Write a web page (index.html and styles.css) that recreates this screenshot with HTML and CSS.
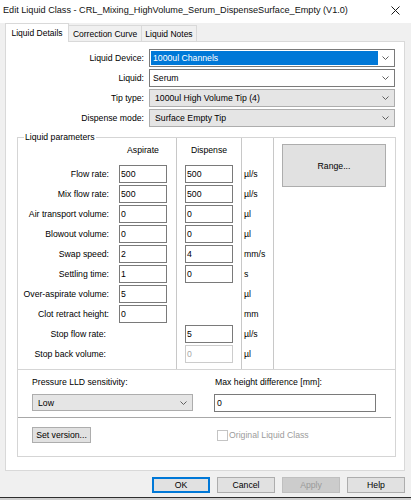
FILE: index.html
```html
<!DOCTYPE html>
<html>
<head>
<meta charset="utf-8">
<title>Edit Liquid Class</title>
<link rel="stylesheet" href="styles.css">
</head>
<body>
<div class="window">
  <div class="titlebar">
    <span class="title">Edit Liquid Class - CRL_Mixing_HighVolume_Serum_DispenseSurface_Empty (V1.0)</span>
    <svg class="close" width="9" height="9" viewBox="0 0 9 9"><path d="M0.5 0.5L8.5 8.5M8.5 0.5L0.5 8.5" stroke="#1a1a1a" stroke-width="1" fill="none"/></svg>
  </div>
  <div class="tabs">
    <div class="tab active">Liquid Details</div>
    <div class="tab cc">Correction Curve</div>
    <div class="tab ln">Liquid Notes</div>
  </div>
  <div class="panel">
    <div class="combos">
      <div class="clabel">Liquid Device:</div>
      <div class="combo focus"><span class="sel">1000ul Channels</span><svg class="chev" width="7" height="4" viewBox="0 0 7 4"><polyline points="0.5,0.5 3.5,3.5 6.5,0.5" fill="none" stroke="#606060" stroke-width="1"/></svg></div>
      <div class="clabel">Liquid:</div>
      <div class="combo"><span class="val">Serum</span><svg class="chev" width="7" height="4" viewBox="0 0 7 4"><polyline points="0.5,0.5 3.5,3.5 6.5,0.5" fill="none" stroke="#606060" stroke-width="1"/></svg></div>
      <div class="clabel">Tip type:</div>
      <div class="combo dd"><span class="val">1000ul High Volume Tip (4)</span><svg class="chev" width="7" height="4" viewBox="0 0 7 4"><polyline points="0.5,0.5 3.5,3.5 6.5,0.5" fill="none" stroke="#606060" stroke-width="1"/></svg></div>
      <div class="clabel">Dispense mode:</div>
      <div class="combo dd"><span class="val">Surface Empty Tip</span><svg class="chev" width="7" height="4" viewBox="0 0 7 4"><polyline points="0.5,0.5 3.5,3.5 6.5,0.5" fill="none" stroke="#606060" stroke-width="1"/></svg></div>
    </div>

    <div class="group">
      <span class="legend">Liquid parameters</span>
      <div class="col labels">
        <div class="head"></div>
        <div class="lrow">Flow rate:</div>
        <div class="lrow">Mix flow rate:</div>
        <div class="lrow">Air transport volume:</div>
        <div class="lrow">Blowout volume:</div>
        <div class="lrow">Swap speed:</div>
        <div class="lrow">Settling time:</div>
        <div class="lrow">Over-aspirate volume:</div>
        <div class="lrow">Clot retract height:</div>
        <div class="lrow stop">Stop flow rate:</div>
        <div class="lrow stop">Stop back volume:</div>
      </div>
      <div class="col asp">
        <div class="head">Aspirate</div>
        <div class="tb">500</div>
        <div class="tb">500</div>
        <div class="tb">0</div>
        <div class="tb">0</div>
        <div class="tb">2</div>
        <div class="tb">1</div>
        <div class="tb">5</div>
        <div class="tb">0</div>
      </div>
      <div class="col disp">
        <div class="head">Dispense</div>
        <div class="tb">500</div>
        <div class="tb">500</div>
        <div class="tb">0</div>
        <div class="tb">0</div>
        <div class="tb">4</div>
        <div class="tb">0</div>
        <div class="blank"></div>
        <div class="blank"></div>
        <div class="tb">5</div>
        <div class="tb disabled">0</div>
      </div>
      <div class="col units">
        <div class="head"></div>
        <div class="urow">µl/s</div>
        <div class="urow">µl/s</div>
        <div class="urow">µl</div>
        <div class="urow">µl</div>
        <div class="urow">mm/s</div>
        <div class="urow">s</div>
        <div class="urow">µl</div>
        <div class="urow">mm</div>
        <div class="urow">µl/s</div>
        <div class="urow">µl</div>
      </div>
      <div class="col range">
        <div class="btn rangebtn">Range...</div>
      </div>
    </div>

    <div class="box">
      <div class="lld">
        <div class="slabel">Pressure LLD sensitivity:</div>
        <div class="slabel second">Max height difference [mm]:</div>
        <div class="combo dd low"><span class="val">Low</span><svg class="chev" width="7" height="4" viewBox="0 0 7 4"><polyline points="0.5,0.5 3.5,3.5 6.5,0.5" fill="none" stroke="#606060" stroke-width="1"/></svg></div>
        <div class="tb wide">0</div>
      </div>
      <div class="sep"></div>
      <div class="ver">
        <div class="btn setver">Set version...</div>
        <div class="check"><span class="cbox"></span><span class="ctext">Original Liquid Class</span></div>
      </div>
    </div>
  </div>

  <div class="actions">
    <div class="btn ok">OK</div>
    <div class="btn">Cancel</div>
    <div class="btn off">Apply</div>
    <div class="btn">Help</div>
  </div>
  <div class="edge"></div>
</div>
</body>
</html>
```

FILE: styles.css
```css
* { box-sizing: border-box; }

body {
  margin: 0;
  background: #f0f0f0;
  font-family: "Liberation Sans", Arial, sans-serif;
  font-size: 8.7px;
  color: #000;
}

.window {
  width: 411px;
  height: 500px;
  overflow: hidden;
  display: flex;
  flex-direction: column;
}

/* title bar */
.titlebar {
  height: 23px;
  flex: none;
  background: #fff;
  display: flex;
  align-items: flex-start;
  padding-left: 3px;
}
.title {
  font-size: 9.15px;
  line-height: 12px;
  margin-top: 4px;
  white-space: nowrap;
  color: #111;
}
.close {
  margin: 6px 11px 0 auto;
  flex: none;
}

/* tabs */
.tabs {
  height: 18px;
  flex: none;
  display: flex;
  align-items: flex-end;
  padding-left: 5px;
}
.tab {
  height: 16px;
  border: 1px solid #d9d9d9;
  border-bottom: 0;
  background: #f0f0f0;
  display: flex;
  align-items: center;
  justify-content: center;
  font-size: 8.5px;
  white-space: nowrap;
}
.tab.active {
  width: 64px;
  height: 19px;
  background: #fff;
  position: relative;
  z-index: 1;
  margin-bottom: -1px;
}
.tab.cc { width: 73px; border-left: 0; }
.tab.ln { width: 55px; border-left: 0; }

/* panel */
.panel {
  flex: none;
  height: 430px;
  margin: 0 6px 0 5px;
  border: 1px solid #d9d9d9;
  background: #fff;
  padding-top: 7px;
}

/* top combos */
.combos {
  display: grid;
  grid-template-columns: 138px 246px;
  grid-auto-rows: 18px;
  column-gap: 5px;
  row-gap: 2px;
}
.clabel {
  text-align: right;
  line-height: 18px;
  white-space: nowrap;
}
.combo {
  height: 18px;
  border: 1px solid #7a7a7a;
  background: #fff;
  display: flex;
  align-items: center;
  padding: 0 5px 0 2px;
}
.combo .val {
  flex: 1;
  white-space: nowrap;
  padding-left: 1px;
}
.combo.dd {
  background: #e5e5e5;
  border-color: #adadad;
}
.combo.dd .val { padding-left: 3px; }
.combo.focus {
  padding: 1px 5px 1px 1px;
  align-items: stretch;
}
.sel {
  flex: 1;
  background: #0078d7;
  color: #fff;
  padding-left: 2px;
  margin-right: 4px;
  display: flex;
  align-items: center;
  white-space: nowrap;
}
.combo.focus .chev { align-self: center; }
.chev { flex: none; }

/* liquid parameters group */
.group {
  position: relative;
  display: flex;
  width: 379px;
  height: 233px;
  margin: 10px 0 0 11px;
  border: 1px solid #d5d5d5;
}
.legend {
  position: absolute;
  top: -7px;
  left: 6px;
  background: #fff;
  padding: 0 1px;
  line-height: 12px;
  white-space: nowrap;
}
.col {
  display: flex;
  flex-direction: column;
}
.head {
  height: 27px;
  padding-top: 6px;
  line-height: 12px;
  text-align: center;
  flex: none;
}
.labels {
  width: 101px;
  padding-right: 10px;
}
.lrow {
  height: 18px;
  line-height: 18px;
  margin-bottom: 2px;
  text-align: right;
  white-space: nowrap;
}
.lrow.stop { padding-right: 3px; }
.asp {
  width: 58px;
  border-right: 1px solid #c8c8c8;
}
.asp .head, .disp .head { width: 48px; }
.disp {
  width: 65px;
  padding-left: 8px;
  border-right: 1px solid #c8c8c8;
}
.units {
  width: 32px;
  padding-left: 2px;
  border-right: 1px solid #c8c8c8;
}
.urow {
  height: 18px;
  line-height: 19px;
  margin-bottom: 2px;
  white-space: nowrap;
}
.blank { height: 20px; flex: none; }
.range {
  flex: 1;
  padding: 6px 0 0 8px;
}

.tb {
  width: 48px;
  height: 18px;
  flex: none;
  border: 1px solid #7a7a7a;
  background: #fff;
  padding-left: 1px;
  line-height: 16px;
  margin-bottom: 2px;
}
.tb.disabled {
  border-color: #cccccc;
  color: #a8a8a8;
}

.btn {
  background: #e1e1e1;
  border: 1px solid #adadad;
  display: flex;
  align-items: center;
  justify-content: center;
  white-space: nowrap;
}
.rangebtn {
  width: 104px;
  height: 43px;
}

/* bottom box */
.box {
  width: 379px;
  height: 87px;
  margin-left: 11px;
  border: 1px solid #d5d5d5;
  border-top: 0;
}
.lld {
  height: 47px;
  display: grid;
  grid-template-columns: 161px 162px;
  grid-template-rows: 12px 18px;
  column-gap: 21px;
  row-gap: 6px;
  padding: 6px 0 0 14px;
  align-items: start;
}
.slabel {
  line-height: 12px;
  white-space: nowrap;
}
.slabel.second { padding-left: 1px; }
.combo.low { height: 17px; }
.tb.wide {
  width: 162px;
  margin: 0;
  padding-left: 2px;
}
.sep {
  height: 1px;
  background: #a8a8a8;
  margin-right: 4px;
}
.ver {
  display: grid;
  grid-template-columns: 161px 162px;
  column-gap: 21px;
  padding: 9px 0 0 14px;
  align-items: center;
}
.setver {
  width: 59px;
  height: 16px;
}
.check {
  display: flex;
  align-items: center;
  padding-left: 3px;
}
.cbox {
  width: 11px;
  height: 11px;
  border: 1px solid #c4c4c4;
  background: #fff;
  margin-right: 1px;
}
.ctext {
  color: #9c9c9c;
  white-space: nowrap;
}

/* dialog buttons */
.actions {
  flex: none;
  height: 16px;
  margin-top: 6px;
  display: flex;
  justify-content: flex-end;
  gap: 7px;
  padding-right: 6px;
}
.actions .btn {
  width: 58px;
  height: 16px;
}
.actions .ok {
  border-color: #0078d7;
  box-shadow: inset 0 0 0 1px #0078d7;
}
.actions .off {
  background: #cccccc;
  border-color: #bfbfbf;
  color: #9a9a9a;
}
.edge {
  flex: none;
  margin-top: 4px;
  height: 3px;
  border-top: 1px solid #2e2e2e;
  background: #cfcfcf;
}
```
